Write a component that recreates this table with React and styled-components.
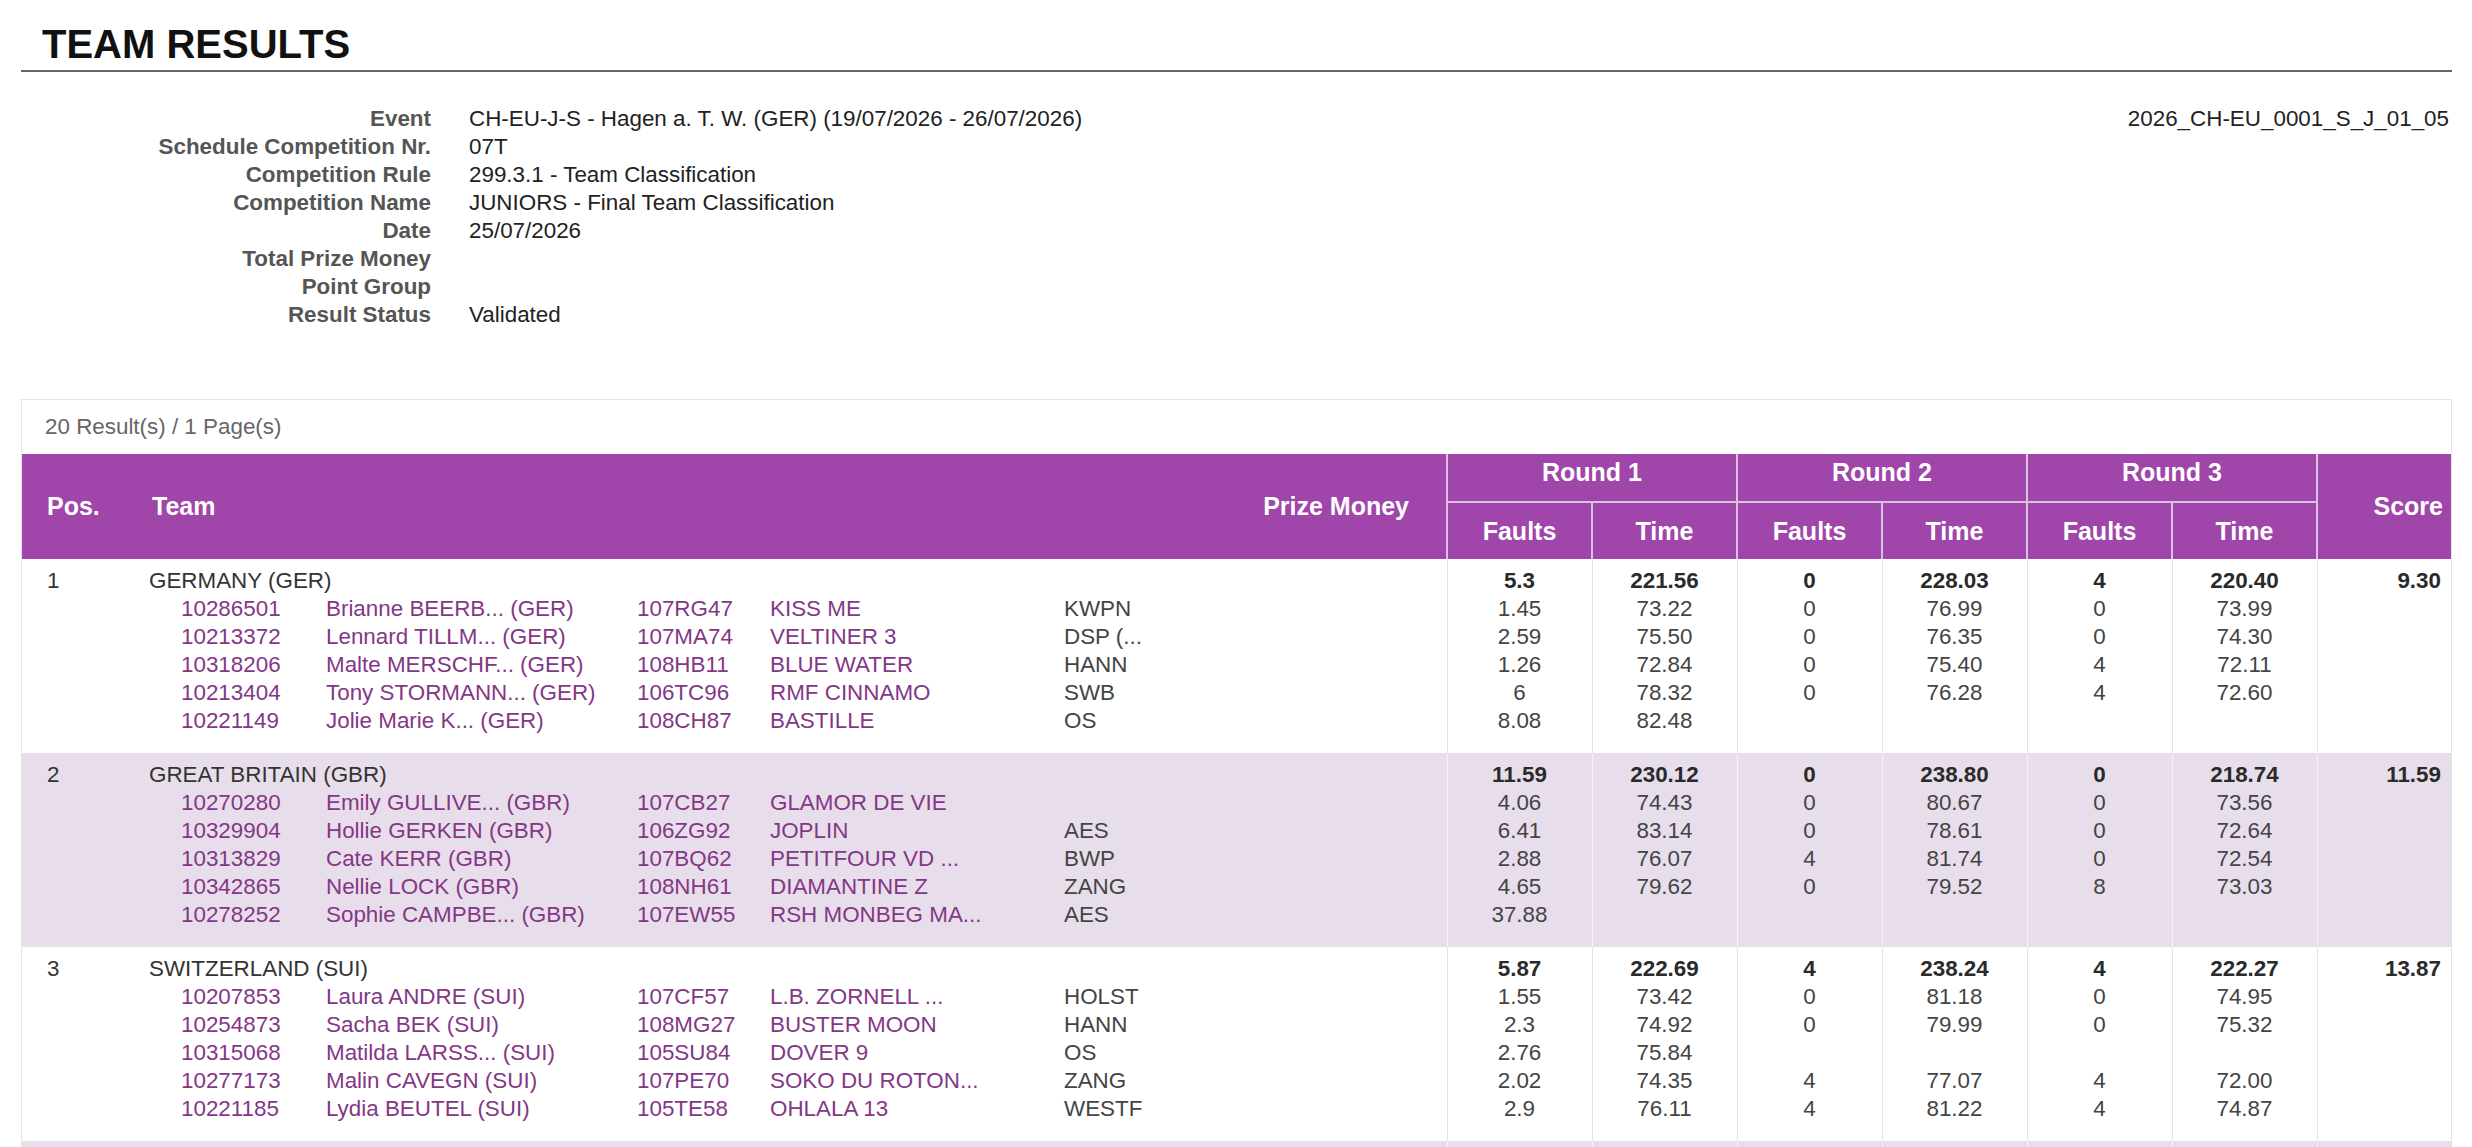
import React from 'react';
import styled, { createGlobalStyle } from 'styled-components';

const GlobalStyle = createGlobalStyle`
  html, body {
    margin: 0;
    padding: 0;
    background: #fff;
  }
  body {
    font-family: "Liberation Sans", Arial, sans-serif;
    font-size: 22.4px;
    color: #333;
  }
`;

const PURPLE = '#a046aa';
const SHADE = '#e8deeb';

const Page = styled.div`
  padding: 22px 20px 0 21px;
`;

const Title = styled.h1`
  margin: 0;
  padding: 0 0 4px 21px;
  font-size: 40px;
  line-height: 44px;
  font-weight: 700;
  color: #111;
  border-bottom: 2px solid #666;
`;

const MetaArea = styled.div`
  display: flex;
  justify-content: space-between;
  align-items: flex-start;
  margin-top: 33px;
`;

const MetaGrid = styled.dl`
  display: grid;
  grid-template-columns: 410px auto;
  column-gap: 38px;
  margin: 0;
  line-height: 28px;
`;

const MetaLabel = styled.dt`
  text-align: right;
  font-weight: 700;
  color: #555;
`;

const MetaValue = styled.dd`
  margin: 0;
  color: #222;
  min-height: 28px;
`;

const DocId = styled.div`
  line-height: 28px;
  color: #222;
  padding-right: 3px;
`;

const Panel = styled.section`
  margin-top: 70px;
  border: 1px solid #e4e4e4;
  border-bottom: none;
`;

const ResultCount = styled.div`
  padding: 13px 23px 13px;
  line-height: 28px;
  color: #666;
`;

const Table = styled.table`
  width: 100%;
  border-collapse: collapse;
  table-layout: fixed;
`;

const HeadCell = styled.th`
  background: ${PURPLE};
  color: #fff;
  font-size: 25px;
  font-weight: 700;
  text-align: ${p => p.$align || 'left'};
  padding: ${p => p.$pad || '0'};
  vertical-align: middle;
  border-left: ${p => (p.$line ? '2px solid #dcc0e0' : 'none')};
  border-bottom: ${p => (p.$under ? '2px solid #dcc0e0' : 'none')};
`;

const RoundRow = styled.tr`
  height: 48px;
`;

const SubRow = styled.tr`
  height: 57px;
`;

const Row = styled.tr`
  background: ${p => (p.$shade ? SHADE : '#fff')};
`;

const Cell = styled.td`
  vertical-align: top;
  padding: ${p => p.$pad || '8px 0 18px'};
  line-height: 28px;
  text-align: ${p => p.$align || 'left'};
  border-left: ${p => (p.$line ? `1px solid ${p.$shade ? '#f7f2f8' : '#e2e2e2'}` : 'none')};
`;

const TeamName = styled.div`
  color: #333;
  min-height: 28px;
`;

const RiderGrid = styled.div`
  display: grid;
  grid-template-columns: 145px 311px 133px 294px auto;
  padding-left: 32px;
`;

const RiderText = styled.span`
  color: ${p => (p.$plain ? '#444' : '#833786')};
  white-space: nowrap;
  min-height: 28px;
`;

const Value = styled.div`
  min-height: 28px;
  font-weight: ${p => (p.$bold ? 700 : 400)};
  color: ${p => (p.$bold ? '#2a2a2a' : '#444')};
`;

const teams = [
  {
    pos: '1',
    team: 'GERMANY (GER)',
    totals: ['5.3', '221.56', '0', '228.03', '4', '220.40'],
    score: '9.30',
    riders: [
      ['10286501', 'Brianne BEERB... (GER)', '107RG47', 'KISS ME', 'KWPN', ['1.45', '73.22', '0', '76.99', '0', '73.99']],
      ['10213372', 'Lennard TILLM... (GER)', '107MA74', 'VELTINER 3', 'DSP (...', ['2.59', '75.50', '0', '76.35', '0', '74.30']],
      ['10318206', 'Malte MERSCHF... (GER)', '108HB11', 'BLUE WATER', 'HANN', ['1.26', '72.84', '0', '75.40', '4', '72.11']],
      ['10213404', 'Tony STORMANN... (GER)', '106TC96', 'RMF CINNAMO', 'SWB', ['6', '78.32', '0', '76.28', '4', '72.60']],
      ['10221149', 'Jolie Marie K... (GER)', '108CH87', 'BASTILLE', 'OS', ['8.08', '82.48', '', '', '', '']],
    ],
  },
  {
    pos: '2',
    team: 'GREAT BRITAIN (GBR)',
    totals: ['11.59', '230.12', '0', '238.80', '0', '218.74'],
    score: '11.59',
    riders: [
      ['10270280', 'Emily GULLIVE... (GBR)', '107CB27', 'GLAMOR DE VIE', '', ['4.06', '74.43', '0', '80.67', '0', '73.56']],
      ['10329904', 'Hollie GERKEN (GBR)', '106ZG92', 'JOPLIN', 'AES', ['6.41', '83.14', '0', '78.61', '0', '72.64']],
      ['10313829', 'Cate KERR (GBR)', '107BQ62', 'PETITFOUR VD ...', 'BWP', ['2.88', '76.07', '4', '81.74', '0', '72.54']],
      ['10342865', 'Nellie LOCK (GBR)', '108NH61', 'DIAMANTINE Z', 'ZANG', ['4.65', '79.62', '0', '79.52', '8', '73.03']],
      ['10278252', 'Sophie CAMPBE... (GBR)', '107EW55', 'RSH MONBEG MA...', 'AES', ['37.88', '', '', '', '', '']],
    ],
  },
  {
    pos: '3',
    team: 'SWITZERLAND (SUI)',
    totals: ['5.87', '222.69', '4', '238.24', '4', '222.27'],
    score: '13.87',
    riders: [
      ['10207853', 'Laura ANDRE (SUI)', '107CF57', 'L.B. ZORNELL ...', 'HOLST', ['1.55', '73.42', '0', '81.18', '0', '74.95']],
      ['10254873', 'Sacha BEK (SUI)', '108MG27', 'BUSTER MOON', 'HANN', ['2.3', '74.92', '0', '79.99', '0', '75.32']],
      ['10315068', 'Matilda LARSS... (SUI)', '105SU84', 'DOVER 9', 'OS', ['2.76', '75.84', '', '', '', '']],
      ['10277173', 'Malin CAVEGN (SUI)', '107PE70', 'SOKO DU ROTON...', 'ZANG', ['2.02', '74.35', '4', '77.07', '4', '72.00']],
      ['10221185', 'Lydia BEUTEL (SUI)', '105TE58', 'OHLALA 13', 'WESTF', ['2.9', '76.11', '4', '81.22', '4', '74.87']],
    ],
  },
  // next team row only shows its shaded top edge in the viewport
  { pos: 'row-4', team: '', totals: ['', '', '', '', '', ''], score: '', riders: [], blank: true },
];

const meta = [
  ['Event', 'CH-EU-J-S - Hagen a. T. W. (GER) (19/07/2026 - 26/07/2026)'],
  ['Schedule Competition Nr.', '07T'],
  ['Competition Rule', '299.3.1 - Team Classification'],
  ['Competition Name', 'JUNIORS - Final Team Classification'],
  ['Date', '25/07/2026'],
  ['Total Prize Money', ''],
  ['Point Group', ''],
  ['Result Status', 'Validated'],
];

function TeamRow({ team, shade }) {
  return (
    <Row $shade={shade}>
      <Cell $pad="8px 0 18px 25px">{team.blank ? '' : team.pos}</Cell>
      <Cell $pad="8px 0 18px 12px">
        <TeamName>{team.team}</TeamName>
        <RiderGrid>
          {team.riders.map(r => (
            <React.Fragment key={r[0]}>
              <RiderText>{r[0]}</RiderText>
              <RiderText>{r[1]}</RiderText>
              <RiderText>{r[2]}</RiderText>
              <RiderText>{r[3]}</RiderText>
              <RiderText $plain>{r[4]}</RiderText>
            </React.Fragment>
          ))}
        </RiderGrid>
      </Cell>
      <Cell />
      {team.totals.map((total, i) => (
        <Cell key={i} $align="center" $line $shade={shade}>
          <Value $bold>{total}</Value>
          {team.riders.map(r => (
            <Value key={r[0]}>{r[5][i]}</Value>
          ))}
        </Cell>
      ))}
      <Cell $align="right" $pad="8px 10px 18px 0" $line $shade={shade}>
        <Value $bold>{team.score}</Value>
      </Cell>
    </Row>
  );
}

export default function App() {
  return (
    <>
      <GlobalStyle />
      <Page>
        <Title>TEAM RESULTS</Title>
        <MetaArea>
          <MetaGrid>
            {meta.map(([label, value]) => (
              <React.Fragment key={label}>
                <MetaLabel>{label}</MetaLabel>
                <MetaValue>{value}</MetaValue>
              </React.Fragment>
            ))}
          </MetaGrid>
          <DocId>2026_CH-EU_0001_S_J_01_05</DocId>
        </MetaArea>

        <Panel>
          <ResultCount>20 Result(s) / 1 Page(s)</ResultCount>
          <Table>
            <colgroup>
              <col style={{ width: 115 }} />
              <col style={{ width: 1105 }} />
              <col style={{ width: 205 }} />
              <col style={{ width: 145 }} />
              <col style={{ width: 145 }} />
              <col style={{ width: 145 }} />
              <col style={{ width: 145 }} />
              <col style={{ width: 145 }} />
              <col style={{ width: 145 }} />
              <col />
            </colgroup>
            <thead>
              <RoundRow>
                <HeadCell rowSpan={2} $pad="0 0 0 25px">Pos.</HeadCell>
                <HeadCell rowSpan={2} $pad="0 0 0 15px">Team</HeadCell>
                <HeadCell rowSpan={2} $align="right" $pad="0 37px 0 0">Prize Money</HeadCell>
                {['Round 1', 'Round 2', 'Round 3'].map(r => (
                  <HeadCell key={r} colSpan={2} $align="center" $pad="0 0 10px" $line $under>
                    {r}
                  </HeadCell>
                ))}
                <HeadCell rowSpan={2} $align="right" $pad="0 8px 0 0" $line>Score</HeadCell>
              </RoundRow>
              <SubRow>
                {[1, 2, 3].map(n => (
                  <React.Fragment key={n}>
                    <HeadCell $align="center" $line>Faults</HeadCell>
                    <HeadCell $align="center" $line>Time</HeadCell>
                  </React.Fragment>
                ))}
              </SubRow>
            </thead>
            <tbody>
              {teams.map((team, i) => (
                <TeamRow key={team.pos} team={team} shade={i % 2 === 1} />
              ))}
            </tbody>
          </Table>
        </Panel>
      </Page>
    </>
  );
}
